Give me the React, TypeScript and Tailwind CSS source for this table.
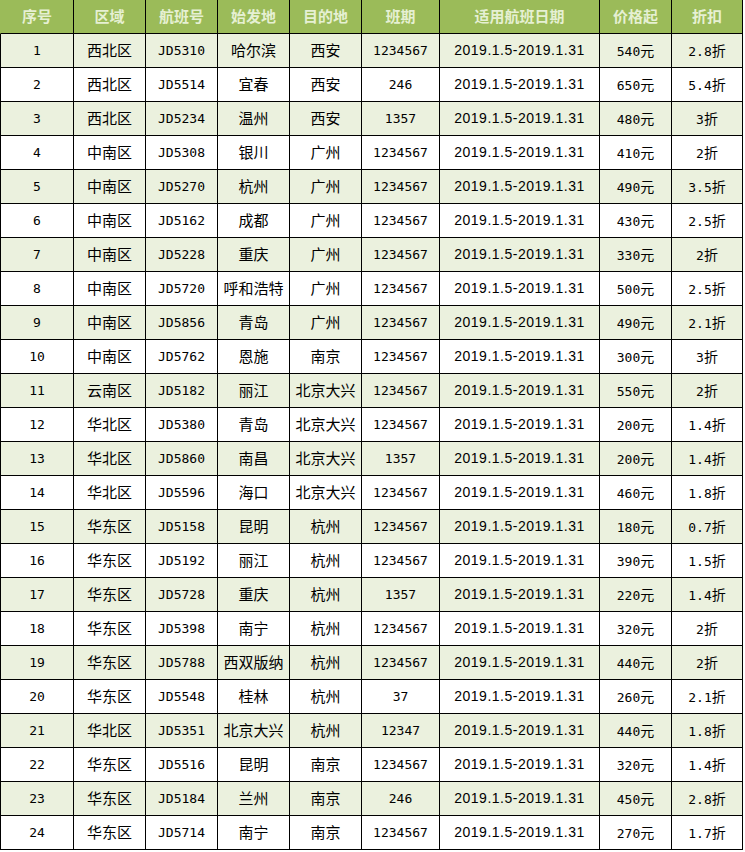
import React from "react";

type Row = string[];

const rows: Row[] = [
  ["西北区", "JD5310", "哈尔滨", "西安", "1234567", "540元", "2.8折"],
  ["西北区", "JD5514", "宜春", "西安", "246", "650元", "5.4折"],
  ["西北区", "JD5234", "温州", "西安", "1357", "480元", "3折"],
  ["中南区", "JD5308", "银川", "广州", "1234567", "410元", "2折"],
  ["中南区", "JD5270", "杭州", "广州", "1234567", "490元", "3.5折"],
  ["中南区", "JD5162", "成都", "广州", "1234567", "430元", "2.5折"],
  ["中南区", "JD5228", "重庆", "广州", "1234567", "330元", "2折"],
  ["中南区", "JD5720", "呼和浩特", "广州", "1234567", "500元", "2.5折"],
  ["中南区", "JD5856", "青岛", "广州", "1234567", "490元", "2.1折"],
  ["中南区", "JD5762", "恩施", "南京", "1234567", "300元", "3折"],
  ["云南区", "JD5182", "丽江", "北京大兴", "1234567", "550元", "2折"],
  ["华北区", "JD5380", "青岛", "北京大兴", "1234567", "200元", "1.4折"],
  ["华北区", "JD5860", "南昌", "北京大兴", "1357", "200元", "1.4折"],
  ["华北区", "JD5596", "海口", "北京大兴", "1234567", "460元", "1.8折"],
  ["华东区", "JD5158", "昆明", "杭州", "1234567", "180元", "0.7折"],
  ["华东区", "JD5192", "丽江", "杭州", "1234567", "390元", "1.5折"],
  ["华东区", "JD5728", "重庆", "杭州", "1357", "220元", "1.4折"],
  ["华东区", "JD5398", "南宁", "杭州", "1234567", "320元", "2折"],
  ["华东区", "JD5788", "西双版纳", "杭州", "1234567", "440元", "2折"],
  ["华东区", "JD5548", "桂林", "杭州", "37", "260元", "2.1折"],
  ["华北区", "JD5351", "北京大兴", "杭州", "12347", "440元", "1.8折"],
  ["华东区", "JD5516", "昆明", "南京", "1234567", "320元", "1.4折"],
  ["华东区", "JD5184", "兰州", "南京", "246", "450元", "2.8折"],
  ["华东区", "JD5714", "南宁", "南京", "1234567", "270元", "1.7折"],
];

const grid = "grid grid-cols-[74px_72px_72px_72px_72px_78px_160px_72px_71px] w-[743px]";
const cell = "h-[34px] flex items-center justify-center border-r border-b border-black whitespace-nowrap";
const mono = "font-['DejaVu_Sans_Mono','Noto_Sans_CJK_SC',monospace] text-[13px]";
const cjk = "font-['Noto_Sans_CJK_SC',sans-serif] text-[15px]";
const date = "font-['Liberation_Sans','Noto_Sans_CJK_SC',sans-serif] text-[14px] tracking-[0.5px]";

const headers = ["序号", "区域", "航班号", "始发地", "目的地", "班期", "适用航班日期", "价格起", "折扣"];

function Mixed({ text }: { text: string }) {
  const m = text.match(/^([0-9.]+)(.*)$/);
  if (!m) return <>{text}</>;
  return (
    <span>
      {m[1]}
      <span className="font-['Noto_Sans_CJK_SC',sans-serif] text-[14px]">{m[2]}</span>
    </span>
  );
}

export default function App() {
  return (
    <div className="w-[745px] h-[852px] bg-white text-black">
      <div className={grid}>
        {headers.map((h, i) => (
          <div
            key={h}
            className={`${cell} bg-[#9bbb59] text-[#e6f0d3] font-bold font-['Noto_Sans_CJK_SC',sans-serif] text-[15px] ${
              i === 0 ? "border-l border-l-[#9bbb59]" : ""
            }`}
          >
            {h}
          </div>
        ))}
        {rows.map((r, idx) => {
          const bg = idx % 2 === 0 ? "bg-[#ebf1de]" : "bg-white";
          return (
            <React.Fragment key={idx}>
              <div className={`${cell} ${bg} ${mono} border-l`}>{idx + 1}</div>
              <div className={`${cell} ${bg} ${cjk}`}>{r[0]}</div>
              <div className={`${cell} ${bg} ${mono}`}>{r[1]}</div>
              <div className={`${cell} ${bg} ${cjk}`}>{r[2]}</div>
              <div className={`${cell} ${bg} ${cjk}`}>{r[3]}</div>
              <div className={`${cell} ${bg} ${mono}`}>{r[4]}</div>
              <div className={`${cell} ${bg} ${date}`}>2019.1.5-2019.1.31</div>
              <div className={`${cell} ${bg} ${mono}`}>
                <Mixed text={r[5]} />
              </div>
              <div className={`${cell} ${bg} ${mono}`}>
                <Mixed text={r[6]} />
              </div>
            </React.Fragment>
          );
        })}
      </div>
    </div>
  );
}
